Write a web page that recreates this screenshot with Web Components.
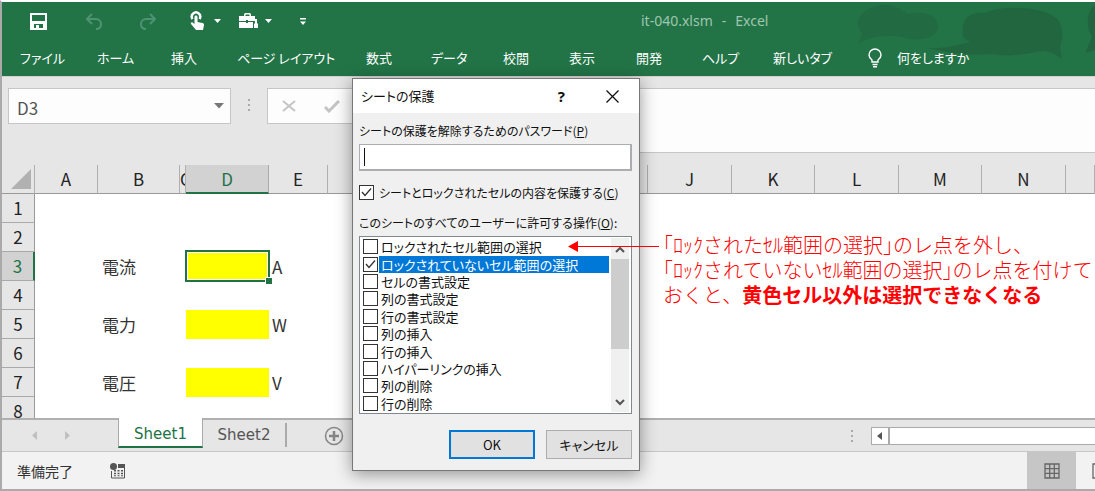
<!DOCTYPE html>
<html lang="ja">
<head>
<meta charset="utf-8">
<title>it-040.xlsm - Excel</title>
<style>
body { margin: 0; font: 14px/20px "Noto Sans CJK JP", "Liberation Sans", sans-serif; color: #222; overflow: hidden; }
</style>
</head>
<body>
<excel-window>
  <title-bar></title-bar>
  <ribbon-tabs></ribbon-tabs>
  <formula-bar></formula-bar>
  <sheet-grid></sheet-grid>
  <sheet-tabs></sheet-tabs>
  <status-bar></status-bar>
  <protect-dialog slot="overlay"></protect-dialog>
  <callout-note slot="overlay">
    <span>「</span>ﾛｯｸされたｾﾙ範囲の選択<span>」</span>のレ点を外し、<br><span>「</span>ﾛｯｸされていないｾﾙ範囲の選択<span>」</span>のレ点を付けて<br>おくと、<b>黄色セル以外は選択できなくなる</b>
  </callout-note>
</excel-window>
<script>
const base = `*{box-sizing:border-box}
button{font:inherit;color:inherit;background:none;border:0;padding:0;margin:0}
svg{display:block}`;

function define(name, css, html) {
  const template = document.createElement('template');
  template.innerHTML = `<style>${base}${css}</style>${html}`;
  customElements.define(name, class extends HTMLElement {
    constructor() {
      super();
      this.attachShadow({ mode: 'open' }).append(template.content.cloneNode(true));
    }
  });
}

define('excel-window', `
:host{display:flex;flex-direction:column;position:relative;min-height:100vh;box-sizing:border-box;overflow:hidden;
  border-top:2px solid #fff;border-left:2px solid #aaa;border-bottom:2px solid #aaa;background:#e6e6e6}
`, `<slot></slot><slot name="overlay"></slot>`);

define('title-bar', `
:host{display:block;position:relative;background:#227447;color:#fff}
.bar{display:grid;grid-template-columns:56px 53px 51px 24px 25px 26px 35px 341px 1fr;align-items:center;height:38px;padding-left:28px;position:relative}
h1{display:flex;gap:9px;margin:0;font:14px/20px "Noto Sans","Noto Sans CJK JP",sans-serif;color:#9fc5ae}
.art{position:absolute;right:0;top:0}
.dim{color:#4f9272}
`, `
<svg class="art" width="245" height="74" viewBox="850 2 245 74" fill="#22643f" aria-hidden="true">
  <path d="M858 24c0-12 14-19 28-19 10 0 15 5 22 9 12-3 30-1 30 12 0 11-15 15-30 13-10-4-22-3-32-2-6 1-13 3-18 8 1-4 3-8 4-12-3-3-4-5-4-9z" opacity=".6"/>
  <path d="M963 36c-3-20 10-24 22-23 14-8 62-8 74 8 6 12 3 20 1 26l2 12c-8-6-14-8-20-8-20 4-38 6-50 3-25 2-43-1-65-6 20 1 30-3 43-6-4-2-6-4-7-6z" opacity=".85"/>
  <path d="M1095 5c-9 6-9 24-3 31-2 7-5 11-6 17 3-1 6-2 9-3z"/>
</svg>
<div class="bar">
  <button aria-label="上書き保存"><svg width="17" height="17" viewBox="0 0 17 17" fill="#fff"><path fill-rule="evenodd" d="M0 0h17v17H0zM2 2v6h13V2zM4 11v4h2v-3h3v3h4v-4z"/></svg></button>
  <button class="dim" aria-label="元に戻す"><svg width="17" height="17" viewBox="0 0 17 17" fill="none" stroke="currentColor" stroke-width="2"><path d="M6 1L1 6l5 5M1 6h9a5 5 0 0 1 5 5c0 3-2 5-5 5"/></svg></button>
  <button class="dim" aria-label="やり直し"><svg width="17" height="17" viewBox="0 0 17 17" fill="none" stroke="currentColor" stroke-width="2"><path d="M11 1l5 5-5 5M16 6H7a5 5 0 0 0-5 5c0 3 2 5 5 5"/></svg></button>
  <button aria-label="タッチ"><svg width="16" height="20" viewBox="0 0 16 20"><path d="M2.500 8a4.200 4.200 0 1 1 7 0" fill="none" stroke="#fff" stroke-width="2.400"/><path d="M4.500 6c0-2 3-2 3 0v5l5 1c1 .3 1.500 1 1.500 2l-1 5H6l-5-6c-.8-1.200.6-2.200 1.600-1.400L4.500 13z" fill="#fff"/></svg></button>
  <button aria-label="タッチのメニュー"><svg width="7" height="4" viewBox="0 0 7 4"><path d="M0 0h7L3.500 4z" fill="#fff"/></svg></button>
  <button aria-label="ツール"><svg width="20" height="16" viewBox="0 0 20 16" fill="#fff"><path fill-rule="evenodd" d="M5 3V1.500C5 .5 6 0 7 0h3c1 0 2 .5 2 1.500V3h4v5H9V7H7v1H0V3zM6.500 3h4V1.500h-4zM0 9h7v1h2V9h5v6H0z"/><path d="M16 6h2v4l1 1v4h-4v-4l1-1z"/></svg></button>
  <button aria-label="ツールのメニュー"><svg width="7" height="4" viewBox="0 0 7 4"><path d="M0 0h7L3.500 4z" fill="#fff"/></svg></button>
  <button aria-label="カスタマイズ"><svg width="6" height="7" viewBox="0 0 6 7" fill="#fff"><path d="M0 0h6v1.500H0zM0 3.500h6L3 7z"/></svg></button>
  <h1><span>it-040.xlsm</span><span>-</span><span>Excel</span></h1>
</div>`);

define('ribbon-tabs', `
:host{display:block;background:#227447;color:#fff;font-size:13px}
nav{position:relative;z-index:1;display:grid;grid-template-columns:77px 74px 66px 129px 65px 72px 66px 67px 66px 71px 95px 29px auto;justify-content:start;align-items:center;height:36px;padding-left:18px;font-feature-settings:"palt"}
button{text-align:left;white-space:nowrap}
`, `<nav aria-label="リボン">
<button>ファイル</button><button>ホーム</button><button>挿入</button><button>ページ レイアウト</button><button>数式</button><button>データ</button><button>校閲</button><button>表示</button><button>開発</button><button>ヘルプ</button><button>新しいタブ</button>
<svg width="14" height="20" viewBox="0 0 14 20" fill="none" stroke="#fff" stroke-width="1.400" aria-hidden="true"><path d="M4 14v-2C2 10.500 1 9 1 7a6 6 0 0 1 12 0c0 2-1 3.500-3 5v2zM4.500 16.500h5M5 18.800h4"/></svg>
<button>何をしますか</button></nav>`);

define('formula-bar', `
:host{display:block;background:#e6e6e6;border-top:1px solid #d5d0d3}
.bar{display:grid;grid-template-columns:223px 36px 104px 1fr;padding:11px 0 0 6px;height:76px}
.name{display:flex;align-items:center;height:36px;background:#fdfdfd;border:1px solid #c6c6c6;padding-right:6px}
input{border:0;background:none;outline:0;font:17px/24px "Noto Sans CJK JP",sans-serif;color:#555;padding:3px 0 0 8px;flex:1;min-width:0}
.grip{justify-self:center;margin-top:11px}
.ops{display:flex;align-items:center;height:36px;background:#fdfdfd;border:1px solid #c6c6c6;border-right:0;padding-left:14px;gap:28px}
.text{height:65px;background:#fdfdfd;border:1px solid #c6c6c6;border-width:1px 0;padding-left:8px;width:100%}
`, `<div class="bar">
<div class="name"><input aria-label="名前ボックス" value="D3"><button aria-label="名前の一覧"><svg width="10" height="6" viewBox="0 0 10 6"><path d="M0 0h10L5 5.500z" fill="#777"/></svg></button></div>
<svg class="grip" width="2" height="12" viewBox="0 0 2 12" fill="#aaa"><path d="M0 0h2v2H0zM0 5h2v2H0zM0 10h2v2H0z"/></svg>
<div class="ops"><button aria-label="キャンセル"><svg width="14" height="12" viewBox="0 0 14 12" stroke="#c4c4c4" stroke-width="2"><path d="M1 1l12 10M13 1L1 11"/></svg></button>
<button aria-label="入力"><svg width="16" height="13" viewBox="0 0 16 13" fill="none" stroke="#c4c4c4" stroke-width="3"><path d="M1 7l4 4L15 1"/></svg></button></div>
<input class="text" aria-label="数式バー"></div>`);

define('sheet-grid', `
:host{display:block;flex:1 1 0;min-height:0;overflow:hidden;background:linear-gradient(#e6e6e6 13px,#fff 13px)}
table{border-collapse:separate;border-spacing:0;table-layout:fixed;width:100%;margin-top:12px;font-size:17px;line-height:24px}
.rh{width:33px}.a{width:63px}.b{width:82px}.c{width:6px}.d,.k,.m{width:83px}.e{width:59px}.f{width:80px}.w{width:84px}
th,td{padding:0;height:29px;font-weight:400;overflow:hidden;white-space:nowrap;vertical-align:middle}
thead th{background:#e6e6e6;border-right:1px solid #b0b0b0;border-bottom:1px solid #999;font-size:17px;line-height:26px;color:#222}
thead th.on{background:#d2d2d2;border-bottom:2px solid #217346;color:#217346;border-right-color:#aaa}
tbody th{background:#e6e6e6;border-right:1px solid #999;border-bottom:1px solid #aaa;font-size:17px}
tbody th.on{background:#d2d2d2;color:#217346;border-right:2px solid #217346}
td{text-align:left;padding-left:3px;color:#333}
td:nth-child(3){padding-left:4px}
td.y{background:#ff0}
td.sel{position:relative;overflow:visible}
.sel i{position:absolute;inset:-2px -1px -1px -1px;border:2px solid #217346;box-shadow:inset 0 0 0 1px #fff}
.sel i::after{content:"";position:absolute;right:-4px;bottom:-4px;width:6px;height:6px;background:#217346;border:solid #fff;border-width:1px 0 0 1px;box-sizing:content-box}
thead svg{margin-left:9px}
`, `<table>
<colgroup><col class="rh"><col class="a"><col class="b"><col class="c"><col class="d"><col class="e"><col class="f"><col class="f"><col class="f"><col class="f"><col class="w"><col class="k"><col class="w"><col class="m"><col class="w"><col></colgroup>
<thead><tr><th aria-label="すべて選択"><svg width="20" height="20" viewBox="0 0 20 20"><path d="M20 0v20H0z" fill="#b1b1b1"/></svg></th><th>A</th><th>B</th><th>C</th><th class="on">D</th><th>E</th><th></th><th></th><th></th><th></th><th>J</th><th>K</th><th>L</th><th>M</th><th>N</th><th></th></tr></thead>
<tbody>
<tr><th>1</th></tr>
<tr><th>2</th></tr>
<tr><th class="on">3</th><td></td><td>電流</td><td></td><td class="y sel"><i></i></td><td>A</td></tr>
<tr><th>4</th></tr>
<tr><th>5</th><td></td><td>電力</td><td></td><td class="y"></td><td>W</td></tr>
<tr><th>6</th></tr>
<tr><th>7</th><td></td><td>電圧</td><td></td><td class="y"></td><td>V</td></tr>
<tr><th>8</th></tr>
</tbody></table>`);

define('sheet-tabs', `
:host{display:flex;box-sizing:border-box;height:34px;background:#e6e6e6;border-top:2px solid #b0b0b0;border-bottom:1px solid #c6c6c6;font:15px/20px "DejaVu Sans",sans-serif;color:#555}
.nav{display:flex;gap:28px;width:116px;padding:11px 0 0 30px}
[role=tab]{height:30px;width:85px}
.on{margin-top:-2px;padding-top:3px;background:#fff;color:#217346;border:solid #aaa;border-width:0 1px;border-bottom:2px solid #217346}
.two{width:84px;height:24px;margin-top:3px;border-right:2px solid #aaa}
.two{height:24px}
.add{margin-left:37px;align-self:center}
.hs{display:flex;align-items:center;margin-left:auto;flex:0 0 244px}
.dots{margin-right:18px}
.track{flex:1;display:flex;height:18px;border:1px solid #aaa;border-right:0;background:#fff}
.track button{width:18px;border-right:2px solid #aaa;padding-left:5px}
`, `<div class="nav"><svg width="5" height="9" viewBox="0 0 5 9"><path d="M5 0v9L0 4.500z" fill="#c0c0c0"/></svg><svg width="5" height="9" viewBox="0 0 5 9"><path d="M0 0v9l5-4.500z" fill="#c0c0c0"/></svg></div>
<button role="tab" aria-selected="true" class="on">Sheet1</button><button role="tab" class="two">Sheet2</button>
<button class="add" aria-label="新しいシート"><svg width="20" height="20" viewBox="0 0 20 20" fill="none" stroke="#858585"><circle cx="10" cy="10" r="8.500" stroke-width="1.500"/><path d="M5 10h10M10 5v10" stroke-width="2.500"/></svg></button>
<div class="hs"><svg class="dots" width="2" height="12" viewBox="0 0 2 12" fill="#aaa"><path d="M0 0h2v2H0zM0 5h2v2H0zM0 10h2v2H0z"/></svg><div class="track"><button aria-label="左へ"><svg width="5" height="8" viewBox="0 0 5 8"><path d="M5 0v8L0 4z" fill="#555"/></svg></button></div></div>`);

define('status-bar', `
:host{display:flex;align-items:center;height:37px;background:#f2f2f2;padding-left:15px;color:#333}
.rec{margin-left:37px}
.view{margin-left:auto;align-self:stretch;width:49px;background:#c6c6c6;display:grid;place-items:center}
.next{margin-left:16px;width:3px;overflow:hidden}
`, `<span>準備完了</span>
<button class="rec" aria-label="マクロの記録"><svg width="16" height="16" viewBox="0 0 16 16" fill="#555"><circle cx="3.500" cy="3.500" r="3.500"/><path d="M8 1h7v4H8z"/><path d="M1.500 8v7h13V4" fill="none" stroke="#555"/><path d="M4 7h2v1.500H4zM7.500 7h2v1.500h-2zM11 7h2v1.500h-2zM4 9.700h2v1.500H4zM7.500 9.700h2v1.500h-2zM11 9.700h2v1.500h-2zM4 12.300h2v1H4zM7.500 12.300h2v1h-2zM11 12.300h2v1h-2z"/></svg></button>
<button class="view" aria-label="標準"><svg width="16" height="16" viewBox="0 0 16 16" fill="none" stroke="#666" stroke-width="1.300"><path d="M1 1h14v14H1zM5.700 1v14M10.300 1v14M1 5.700h14M1 10.300h14"/></svg></button>
<button class="next" aria-label="ページ レイアウト"><svg width="16" height="16" viewBox="0 0 16 16" fill="none" stroke="#666" stroke-width="1.300"><path d="M1 1h14v14H1z"/></svg></button>`);

define('check-row', `
:host{display:flex;align-items:center;min-height:0}
label{display:flex;align-items:center;flex:1;min-width:0;height:100%}
input{appearance:none;margin:0;width:15px;height:15px;flex:none;border:1px solid #333;background:#fff}
input:checked{background:#fff url("data:image/svg+xml,%3Csvg xmlns='http://www.w3.org/2000/svg' viewBox='0 0 13 13'%3E%3Cpath d='M2 6l3 3.500 6-7' fill='none' stroke='%23333' stroke-width='1.300'/%3E%3C/svg%3E")}
span{flex:1;margin-left:var(--gap,1px);padding-left:2px;line-height:17px;white-space:nowrap;font-feature-settings:"palt"}
:host([selected]) span{background:#0078d7;color:#fff}
`, `<label><input type="checkbox"><span><slot></slot></span></label>`);

define('protect-dialog', `
:host{display:block;position:absolute;left:350px;top:76px;width:286px;background:#f0f0f0;border:1px solid #777;box-shadow:0 3px 16px rgba(0,0,0,.4);color:#111;font-size:13px;font-feature-settings:"palt"}
header{display:flex;align-items:center;height:34px;background:#fff;padding:0 20px 0 8px}
h2{margin:0;flex:1;font-size:13px;font-weight:400}
header button+button{margin-left:41px}
.q{font:bold 15px/20px "Noto Sans",sans-serif}
.body{padding:8px 7px 11px 6px}
.body>label{display:block;white-space:nowrap;font-size:12px;line-height:20px}
.pw{display:block;width:100%;height:27px;margin:3px 0 14px;border:1px solid #abadb3;border-width:1px 2px 2px 1px;background:linear-gradient(#111,#111) 4px 3px/1px 18px no-repeat #fff;padding:0 4px;font:18px/22px "Noto Sans CJK JP",sans-serif;outline:0}
.protect{--gap:3px;height:15px;margin-bottom:13px;font-size:12px}
.list{display:flex;height:178px;border:1px solid #828790;background:#fff;margin:3px 0 16px;padding:1px 2px 1px 3px}
.items{flex:1;display:grid;grid-auto-rows:1fr}
.scroll{display:flex;flex-direction:column;align-items:center;width:18px;margin-left:2px;background:#f0f0f0}
.scroll svg{flex:none;margin:8px 0 6px}
.thumb{width:100%;height:90px;background:#cdcdcd}
.scroll svg:last-child{margin:auto 0 6px}
.actions{display:flex;justify-content:flex-end;gap:11px}
.actions button{width:86px;height:29px;background:#e1e1e1;border:1px solid #adadad}
.actions .ok{border:2px solid #0078d7}
`, `<header><h2>シートの保護</h2><button class="q" aria-label="ヘルプ">?</button><button aria-label="閉じる"><svg width="13" height="13" viewBox="0 0 13 13" stroke="#111" stroke-width="1.300"><path d="M.5.5l12 12M12.500.5l-12 12"/></svg></button></header>
<div class="body"><label for="pw">シートの保護を解除するためのパスワード(<u>P</u>)</label>
<input class="pw" id="pw" value="" type="text">
<check-row class="protect" checked>シートとロックされたセルの内容を保護する(<u>C</u>)</check-row>
<label id="perm">このシートのすべてのユーザーに許可する操作(<u>O</u>):</label>
<div class="list" role="group" aria-labelledby="perm"><div class="items">
<check-row>ロックされたセル範囲の選択</check-row><check-row checked selected>ロックされていないセル範囲の選択</check-row><check-row>セルの書式設定</check-row><check-row>列の書式設定</check-row><check-row>行の書式設定</check-row><check-row>列の挿入</check-row><check-row>行の挿入</check-row><check-row>ハイパーリンクの挿入</check-row><check-row>列の削除</check-row><check-row>行の削除</check-row></div>
<div class="scroll"><svg width="10" height="7" viewBox="0 0 10 7" fill="none" stroke="#555" stroke-width="2"><path d="M1 6l4-4 4 4"/></svg><div class="thumb"></div><svg width="10" height="7" viewBox="0 0 10 7" fill="none" stroke="#555" stroke-width="2"><path d="M1 1l4 4 4-4"/></svg></div></div>
<div class="actions"><button class="ok">OK</button><button>キャンセル</button></div></div>`);

for (const dialog of document.querySelectorAll('excel-window > protect-dialog')) {
  for (const row of dialog.shadowRoot.querySelectorAll('check-row[checked]'))
    row.shadowRoot.querySelector('input').checked = true;
}

define('callout-note', `
:host{display:flex;align-items:flex-start;position:absolute;left:566px;top:230px;color:#f00}
svg{flex:none;margin-top:9px}
p{margin:0 0 0 4px;font-size:20px;font-weight:300;line-height:25px;white-space:nowrap}
::slotted(b){font-weight:700}
::slotted(span){font-feature-settings:"halt"}
`, `<svg width="91" height="11" viewBox="0 0 91 11" fill="#f00"><path d="M0 5.500L10 0v11zM10 5h81v1H10z"/></svg><p><slot></slot></p>`);
</script>
</body>
</html>
